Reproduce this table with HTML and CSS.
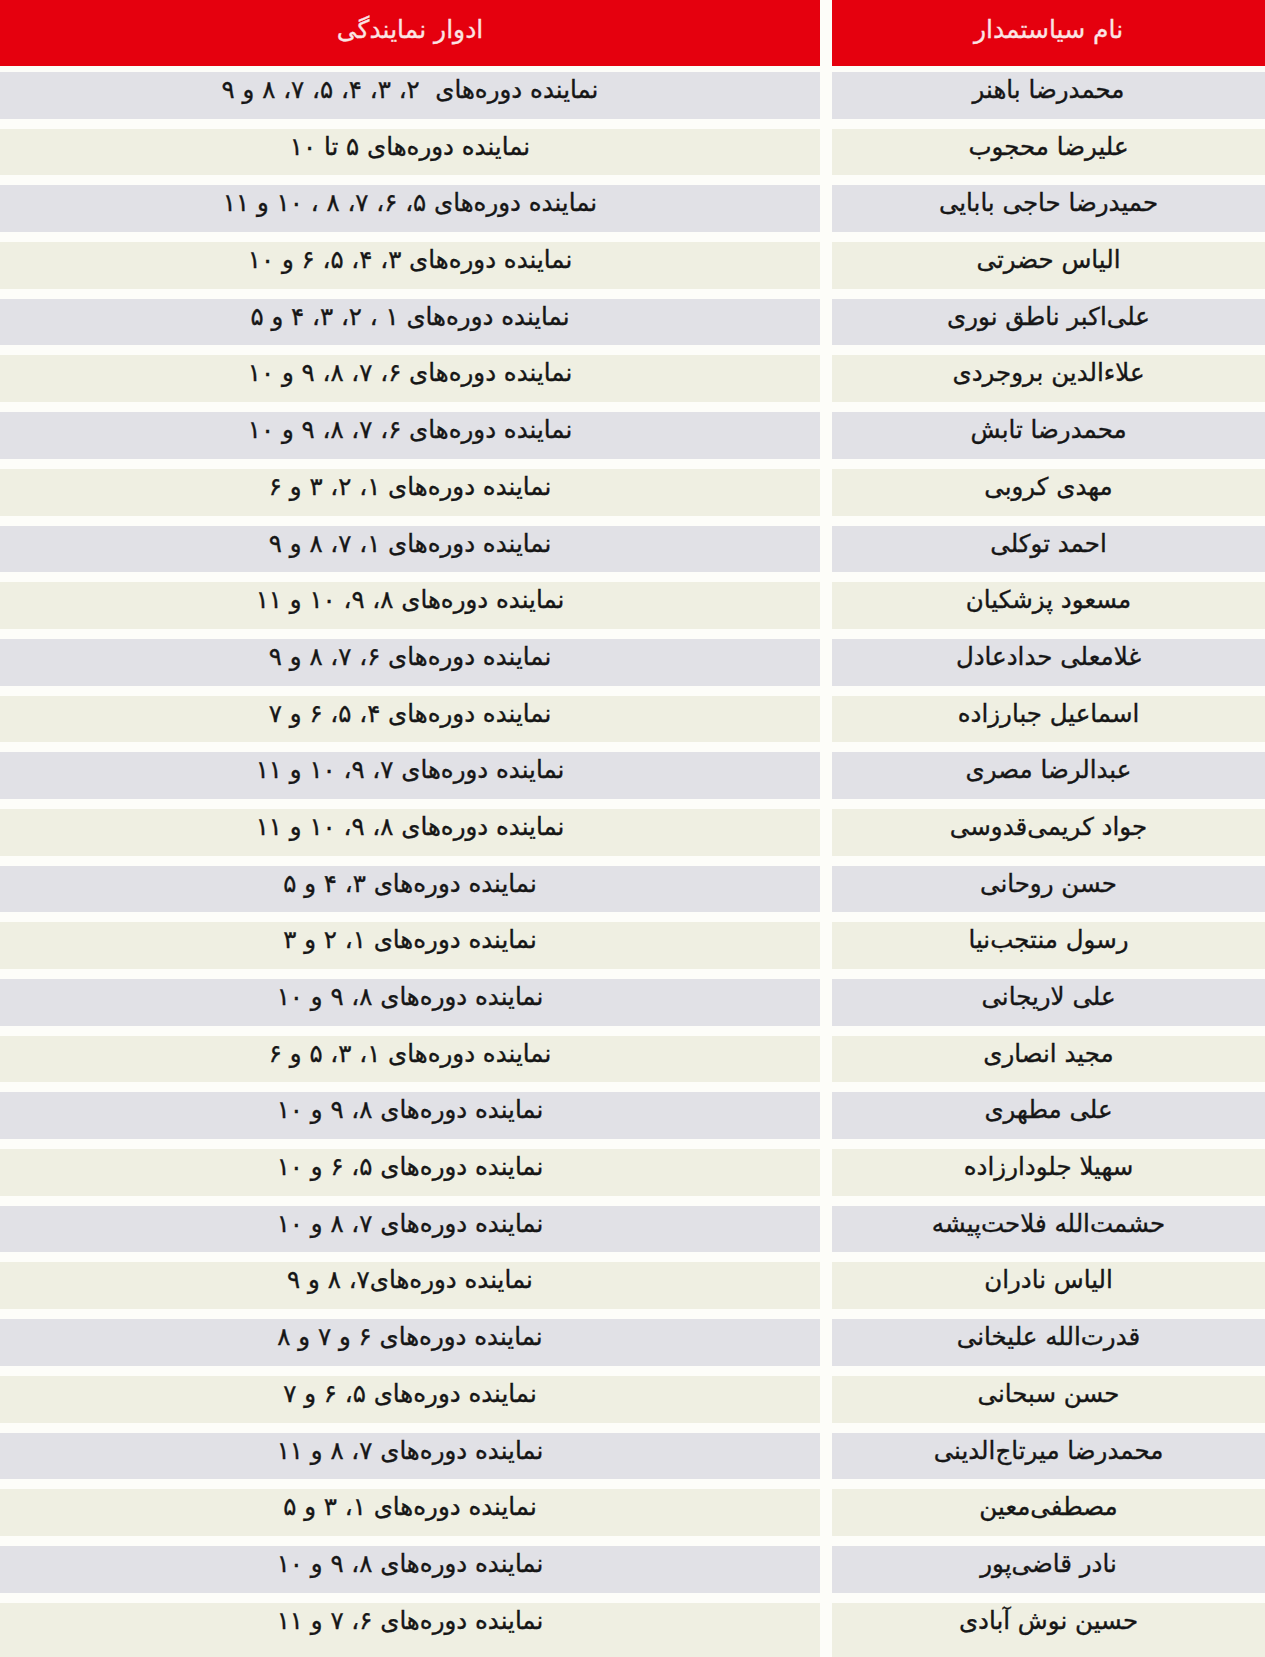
FILE: index.html
```html
<!DOCTYPE html>
<html lang="fa" dir="rtl">
<head>
<meta charset="utf-8">
<title>جدول نمایندگان</title>
<link rel="stylesheet" href="styles.css">
</head>
<body>
<div class="table">
  <div class="row head">
    <div class="cell">نام سیاستمدار</div>
    <div class="cell">ادوار نمایندگی</div>
  </div>
  <div class="rows">
    <div class="row"><div class="cell">محمدرضا باهنر</div><div class="cell">نماینده دوره‌های  ۲، ۳، ۴، ۵، ۷، ۸ و ۹</div></div>
    <div class="row"><div class="cell">علیرضا محجوب</div><div class="cell">نماینده دوره‌های ۵ تا ۱۰</div></div>
    <div class="row"><div class="cell">حمیدرضا حاجی بابایی</div><div class="cell">نماینده دوره‌های ۵، ۶، ۷، ۸ ، ۱۰ و ۱۱</div></div>
    <div class="row"><div class="cell">الیاس حضرتی</div><div class="cell">نماینده دوره‌های ۳، ۴، ۵، ۶ و ۱۰</div></div>
    <div class="row"><div class="cell">علی‌اکبر ناطق نوری</div><div class="cell">نماینده دوره‌های ۱ ، ۲، ۳، ۴ و ۵</div></div>
    <div class="row"><div class="cell">علاءالدین بروجردی</div><div class="cell">نماینده دوره‌های ۶، ۷، ۸، ۹ و ۱۰</div></div>
    <div class="row"><div class="cell">محمدرضا تابش</div><div class="cell">نماینده دوره‌های ۶، ۷، ۸، ۹ و ۱۰</div></div>
    <div class="row"><div class="cell">مهدی کروبی</div><div class="cell">نماینده دوره‌های ۱، ۲، ۳ و ۶</div></div>
    <div class="row"><div class="cell">احمد توکلی</div><div class="cell">نماینده دوره‌های ۱، ۷، ۸ و ۹</div></div>
    <div class="row"><div class="cell">مسعود پزشکیان</div><div class="cell">نماینده دوره‌های ۸، ۹، ۱۰ و ۱۱</div></div>
    <div class="row"><div class="cell">غلامعلی حدادعادل</div><div class="cell">نماینده دوره‌های ۶، ۷، ۸ و ۹</div></div>
    <div class="row"><div class="cell">اسماعیل جبارزاده</div><div class="cell">نماینده دوره‌های ۴، ۵، ۶ و ۷</div></div>
    <div class="row"><div class="cell">عبدالرضا مصری</div><div class="cell">نماینده دوره‌های ۷، ۹، ۱۰ و ۱۱</div></div>
    <div class="row"><div class="cell">جواد کریمی‌قدوسی</div><div class="cell">نماینده دوره‌های ۸، ۹، ۱۰ و ۱۱</div></div>
    <div class="row"><div class="cell">حسن روحانی</div><div class="cell">نماینده دوره‌های ۳، ۴ و ۵</div></div>
    <div class="row"><div class="cell">رسول منتجب‌نیا</div><div class="cell">نماینده دوره‌های ۱، ۲ و ۳</div></div>
    <div class="row"><div class="cell">علی لاریجانی</div><div class="cell">نماینده دوره‌های ۸، ۹ و ۱۰</div></div>
    <div class="row"><div class="cell">مجید انصاری</div><div class="cell">نماینده دوره‌های ۱، ۳، ۵ و ۶</div></div>
    <div class="row"><div class="cell">علی مطهری</div><div class="cell">نماینده دوره‌های ۸، ۹ و ۱۰</div></div>
    <div class="row"><div class="cell">سهیلا جلودارزاده</div><div class="cell">نماینده دوره‌های ۵، ۶ و ۱۰</div></div>
    <div class="row"><div class="cell">حشمت‌الله فلاحت‌پیشه</div><div class="cell">نماینده دوره‌های ۷، ۸ و ۱۰</div></div>
    <div class="row"><div class="cell">الیاس نادران</div><div class="cell">نماینده دوره‌های۷، ۸ و ۹</div></div>
    <div class="row"><div class="cell">قدرت‌الله علیخانی</div><div class="cell">نماینده دوره‌های ۶ و ۷ و ۸</div></div>
    <div class="row"><div class="cell">حسن سبحانی</div><div class="cell">نماینده دوره‌های ۵، ۶ و ۷</div></div>
    <div class="row"><div class="cell">محمدرضا میرتاج‌الدینی</div><div class="cell">نماینده دوره‌های ۷، ۸ و ۱۱</div></div>
    <div class="row"><div class="cell">مصطفی‌معین</div><div class="cell">نماینده دوره‌های ۱، ۳ و ۵</div></div>
    <div class="row"><div class="cell">نادر قاضی‌پور</div><div class="cell">نماینده دوره‌های ۸، ۹ و ۱۰</div></div>
    <div class="row"><div class="cell">حسین نوش آبادی</div><div class="cell">نماینده دوره‌های ۶، ۷ و ۱۱</div></div>
  </div>
</div>
</body>
</html>
```
FILE: styles.css
```css
html, body {
  margin: 0;
  padding: 0;
  background: #fdfdf9;
}
body {
  width: 1265px;
  height: 1657px;
  overflow: hidden;
  font-family: "DejaVu Sans", "Noto Sans", sans-serif;
  color: #161616;
}
.table {
  display: flex;
  flex-direction: column;
  gap: 6px;
  height: 100%;
}
.row {
  display: grid;
  grid-template-columns: 433px 820px;
  column-gap: 12px;
  height: 46.7px;
  flex: none;
}
.rows {
  display: flex;
  flex-direction: column;
  gap: 10px;
  flex: 1;
}
.rows .row:last-child {
  flex: 1;
  height: auto;
}
.cell {
  text-align: center;
  font-size: 24.5px;
  line-height: 36px;
  white-space: pre;
  -webkit-text-stroke: 0.35px #161616;
}
.head {
  height: 66px;
}
.head .cell {
  background: #e5000e;
  color: #fbe4e4;
  line-height: 60px;
  font-size: 25px;
  -webkit-text-stroke: 0.3px #fbe4e4;
}
.rows .row:nth-child(odd) .cell {
  background: #e1e1e6;
}
.rows .row:nth-child(even) .cell {
  background: #efefe2;
}
```
